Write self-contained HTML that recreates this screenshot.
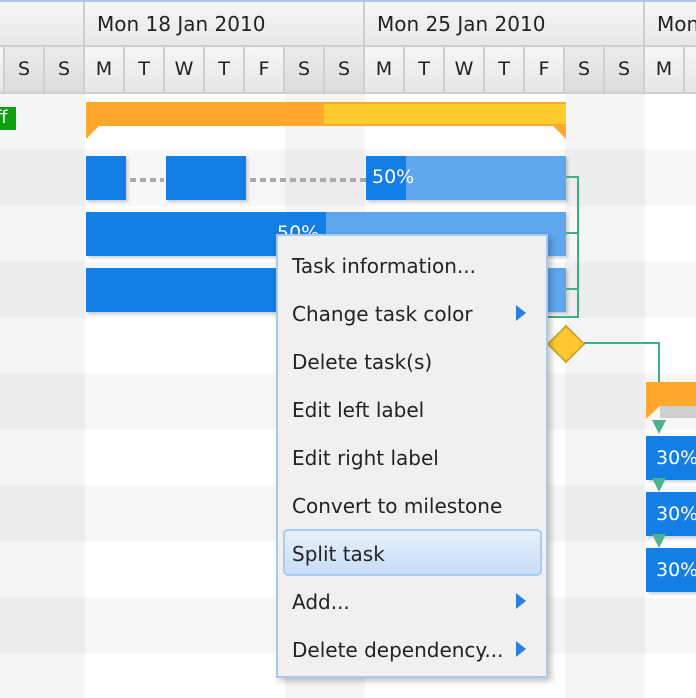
<!DOCTYPE html>
<html><head><meta charset="utf-8"><style>
*{margin:0;padding:0;box-sizing:border-box}
body{width:696px;height:698px;overflow:hidden;background:#fff;position:relative;font-family:"DejaVu Sans","Liberation Sans",sans-serif}
.a{position:absolute}
.dh{position:absolute;top:2px;height:45px;background:linear-gradient(#f6f6f6,#e8e8e8);border-right:2px solid #cfcfcf;border-bottom:2px solid #cfcfcf;font-size:20px;color:#222;line-height:44px;padding-left:12px;white-space:nowrap;overflow:hidden}
.d{position:absolute;top:47px;height:47px;width:40px;background:linear-gradient(#f6f6f6,#e6e6e6);border-right:2px solid #cfcfcf;border-bottom:2px solid #cfcfcf;font-size:19px;color:#222;text-align:center;line-height:44px}
.d.w{background:linear-gradient(#ececec,#dcdcdc)}
.b{position:absolute;background:#127ee6;box-shadow:2px 2px 3px rgba(0,0,0,.18)}
.l{position:absolute;background:#5ea6ee}
.g{position:absolute;background:#3dae85}
.mi{position:absolute;left:292px;font-size:20px;color:#222;white-space:nowrap}
.ar{position:absolute;left:516px;width:0;height:0;border-top:8px solid transparent;border-bottom:8px solid transparent;border-left:10px solid #2f7fe0}
.t30{position:absolute;left:646px;width:50px;height:44px;background:#127ee6;color:#fff;font-size:19px;line-height:44px;padding-left:10px;box-shadow:2px 2px 3px rgba(0,0,0,.18)}
.tri{position:absolute;left:652px;width:0;height:0;border-left:7px solid transparent;border-right:7px solid transparent;border-top:14px solid #4bb48c}
.dot{position:absolute;height:4px;background:repeating-linear-gradient(90deg,#aaa 0 6px,transparent 6px 10px)}
</style></head><body>
<div class="a" style="left:0;top:150px;width:696px;height:56px;background:#f7f7f7"></div>
<div class="a" style="left:0;top:262px;width:696px;height:56px;background:#f7f7f7"></div>
<div class="a" style="left:0;top:374px;width:696px;height:56px;background:#f7f7f7"></div>
<div class="a" style="left:0;top:486px;width:696px;height:56px;background:#f7f7f7"></div>
<div class="a" style="left:0;top:598px;width:696px;height:56px;background:#f7f7f7"></div>
<div class="a" style="left:0;top:94px;width:85px;height:604px;background:rgba(0,0,0,.04)"></div>
<div class="a" style="left:285px;top:94px;width:80px;height:604px;background:rgba(0,0,0,.04)"></div>
<div class="a" style="left:565px;top:94px;width:80px;height:604px;background:rgba(0,0,0,.04)"></div>
<div class="a" style="left:0;top:0;width:696px;height:2px;background:#a9c6ea"></div>
<div class="dh" style="left:0;width:85px"></div>
<div class="dh" style="left:85px;width:280px">Mon 18 Jan 2010</div>
<div class="dh" style="left:365px;width:280px">Mon 25 Jan 2010</div>
<div class="dh" style="left:645px;width:60px">Mon 1</div>
<div class="d" style="left:-35px;width:40px"></div>
<div class="d w" style="left:5px">S</div><div class="d w" style="left:45px">S</div>
<div class="d" style="left:85px">M</div><div class="d" style="left:125px">T</div><div class="d" style="left:165px">W</div><div class="d" style="left:205px">T</div><div class="d" style="left:245px">F</div>
<div class="d w" style="left:285px">S</div><div class="d w" style="left:325px">S</div>
<div class="d" style="left:365px">M</div><div class="d" style="left:405px">T</div><div class="d" style="left:445px">W</div><div class="d" style="left:485px">T</div><div class="d" style="left:525px">F</div>
<div class="d w" style="left:565px">S</div><div class="d w" style="left:605px">S</div>
<div class="d" style="left:645px">M</div><div class="d" style="left:685px">T</div>
<div class="a" style="left:0;top:107px;width:16px;height:23px;background:#0fa010;color:#fff;font-size:18px;line-height:22px;overflow:hidden;text-indent:-5px">ff</div>
<div class="a" style="left:86px;top:102px;width:480px;height:24px;background:#ffa82c"></div>
<div class="a" style="left:324px;top:104px;width:242px;height:20px;background:#ffcc2e"></div>
<svg class="a" style="left:86px;top:125px" width="480" height="15"><polygon points="0,0 14,0 0,14" fill="#ffa82c"/><polygon points="480,0 466,0 480,14" fill="#ffa82c"/></svg>
<div class="dot" style="left:130px;top:178px;width:34px"></div>
<div class="dot" style="left:250px;top:178px;width:116px"></div>
<div class="b" style="left:86px;top:156px;width:40px;height:44px"></div>
<div class="b" style="left:166px;top:156px;width:80px;height:44px"></div>
<div class="b" style="left:366px;top:156px;width:200px;height:44px"><div class="l" style="left:40px;top:0;width:160px;height:44px"></div><span class="a" style="left:6px;top:10px;color:#fff;font-size:19px">50%</span></div>
<div class="b" style="left:86px;top:212px;width:480px;height:44px"><div class="l" style="left:240px;top:0;width:240px;height:44px"></div><span class="a" style="left:191px;top:10px;color:#fff;font-size:19px">50%</span></div>
<div class="b" style="left:86px;top:268px;width:480px;height:44px"><div class="l" style="left:240px;top:0;width:240px;height:44px"></div></div>
<div class="g" style="left:566px;top:176px;width:13px;height:2px"></div>
<div class="g" style="left:566px;top:232px;width:13px;height:2px"></div>
<div class="g" style="left:566px;top:288px;width:13px;height:2px"></div>
<div class="g" style="left:577px;top:176px;width:2px;height:142px"></div>
<div class="g" style="left:548px;top:316px;width:31px;height:2px"></div>
<div class="g" style="left:584px;top:342px;width:76px;height:2px"></div>
<div class="g" style="left:658px;top:342px;width:2px;height:40px"></div>
<svg class="a" style="left:547px;top:325px" width="38" height="38"><polygon points="19,1 37,19 19,37 1,19" fill="#ffc72e" stroke="#c9a83a" stroke-width="2"/></svg>
<div class="a" style="left:646px;top:382px;width:50px;height:24px;background:#ffa82c"></div>
<div class="a" style="left:660px;top:406px;width:36px;height:12px;background:#cfcfcf"></div>
<svg class="a" style="left:646px;top:405px" width="16" height="15"><polygon points="0,0 15,0 0,14" fill="#ffa82c"/></svg>
<div class="tri" style="top:420px"></div>
<div class="t30" style="top:436px">30%</div>
<div class="tri" style="top:478px"></div>
<div class="t30" style="top:492px">30%</div>
<div class="tri" style="top:534px"></div>
<div class="t30" style="top:548px">30%</div>
<div class="a" style="left:276px;top:234px;width:272px;height:444px;background:#f0f0f0;border:2px solid #a8c8ee;box-shadow:3px 3px 6px rgba(0,0,0,.25)"></div>
<div class="a" style="left:283px;top:529px;width:259px;height:47px;border:2px solid #a9cbf2;border-radius:5px;background:linear-gradient(#e6f0fc,#c9ddf7)"></div>
<div class="mi" style="top:254px">Task information...</div>
<div class="mi" style="top:302px">Change task color</div>
<div class="mi" style="top:350px">Delete task(s)</div>
<div class="mi" style="top:398px">Edit left label</div>
<div class="mi" style="top:446px">Edit right label</div>
<div class="mi" style="top:494px">Convert to milestone</div>
<div class="mi" style="top:542px">Split task</div>
<div class="mi" style="top:590px">Add...</div>
<div class="mi" style="top:638px">Delete dependency...</div>
<div class="ar" style="top:305px"></div>
<div class="ar" style="top:593px"></div>
<div class="ar" style="top:641px"></div>
</body></html>
